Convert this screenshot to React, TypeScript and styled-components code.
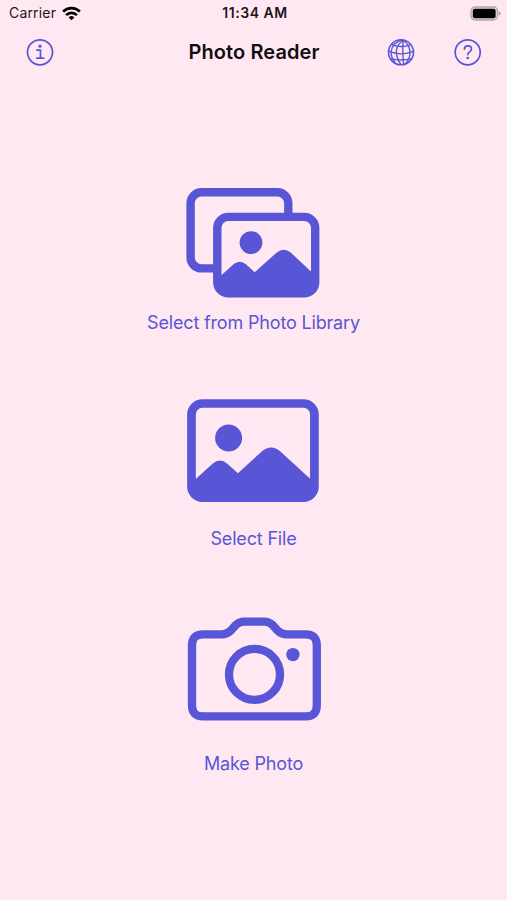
import React from "react";
import styled, { createGlobalStyle } from "styled-components";

const INK = "#5856d6";
const PAGE = "#ffe8f2";

const GlobalStyle = createGlobalStyle`
  body { margin: 0; background: ${PAGE}; }
  svg { display: block; }
`;

const Screen = styled.div`
  width: 507px;
  height: 900px;
  display: flex;
  flex-direction: column;
  overflow: hidden;
  background: ${PAGE};
  font-family: Inter, "Liberation Sans", sans-serif;
`;

const StatusBar = styled.header`
  display: grid;
  grid-template-columns: 1fr auto 1fr;
  align-items: center;
  box-sizing: border-box;
  height: 27px;
  padding: 0 6px 1px 9px;
  font-size: 14px;
  line-height: 26px;
  color: #1c161a;
`;

const Carrier = styled.div`
  display: flex;
  align-items: center;
  gap: 6px;
  letter-spacing: 0.18px;
`;

const Clock = styled.div`
  font-weight: 600;
  font-size: 14px;
  letter-spacing: 0.55px;
`;

const BatterySlot = styled.div`
  display: flex;
  justify-content: flex-end;
`;

const NavBar = styled.nav`
  display: grid;
  grid-template-columns: 1fr auto 1fr;
  align-items: center;
  height: 50px;
  padding: 0 25px 0 26px;
`;

const Title = styled.h1`
  margin: 0;
  font-size: 20px;
  font-weight: 600;
  line-height: 24px;
  letter-spacing: 0.08px;
  color: #120d10;
`;

const NavGroup = styled.div<{ $end?: boolean }>`
  display: flex;
  gap: 39px;
  justify-content: ${(p) => (p.$end ? "flex-end" : "flex-start")};
`;

const IconButton = styled.button`
  padding: 0;
  border: 0;
  background: none;
  color: ${INK};
`;

const Actions = styled.main`
  display: flex;
  flex-direction: column;
  align-items: center;
  padding-top: 98px;
`;

const Action = styled.button<{ $height: number; $gap: number }>`
  display: flex;
  flex-direction: column;
  align-items: center;
  gap: ${(p) => p.$gap}px;
  height: ${(p) => p.$height}px;
  padding: 0;
  border: 0;
  background: none;
  color: ${INK};
  font-family: inherit;
`;

const Label = styled.span`
  font-size: 18px;
  line-height: 24px;
  letter-spacing: -0.17px;
  white-space: nowrap;
`;

const Wifi = () => (
  <svg width="19" height="15" viewBox="0 0 19 15" fill="none" stroke="#000" strokeWidth="2.7">
    <path d="M1.1 5.6a12 12 0 0 1 16.8 0" />
    <path d="M4.1 9.1a7.7 7.7 0 0 1 10.8 0" />
    <path d="M9.5 14.2 6.7 11.4a4 4 0 0 1 5.6 0z" fill="#000" stroke="none" />
  </svg>
);

const Battery = () => (
  <svg width="31" height="15" viewBox="0 0 31 15">
    <rect x="1" y="1" width="26.5" height="13" rx="4" fill="#e9d5de" stroke="#b3a5ac" strokeWidth="1.3" />
    <rect x="2.8" y="2.8" width="22.8" height="9.4" rx="2" fill="#000" />
    <path d="M28.6 5.2q2 .8 2 2.3t-2 2.3z" fill="#a99ca3" />
  </svg>
);

const InfoIcon = () => (
  <svg width="28" height="28" viewBox="0 0 28 28" fill="none" stroke="currentColor" strokeWidth="1.7">
    <circle cx="14" cy="14.3" r="12.5" />
    <path d="M11 12.2h3.5v8M10.7 20.2h7" strokeLinecap="round" strokeLinejoin="round" />
    <circle cx="14" cy="8.2" r="1.6" fill="currentColor" stroke="none" />
  </svg>
);

const GlobeIcon = () => (
  <svg width="28" height="28" viewBox="0 0 28 28" fill="none" stroke="currentColor" strokeWidth="1.35">
    <circle cx="14" cy="14.3" r="12.5" strokeWidth="1.6" />
    <path d="M16.3 2.2C10.6 6 8.3 11.5 9.7 17.5c.8 3.5 2.2 6.6 4.3 9.2" />
    <path d="M15.6 2.2C9.5 2.9 4.6 7.8 4 14c-.1 3.7 1.4 7 4 10.5" />
    <path d="M16.3 2.2c-.8 6.4-.5 15.7.3 24.3" />
    <path d="M16.3 2.2c4.4 3.1 6.8 7.4 6.7 12.8-.1 4-1.4 7.2-4.4 10.8" />
    <path d="M4.4 6.4c5.2 2.6 13.3 2.8 19 .4M1.6 13.2c7 3.3 17.3 3.6 24.8.2M3.4 20.7c7 1.8 14 1.8 21.2 0" />
  </svg>
);

const HelpIcon = () => (
  <svg width="28" height="28" viewBox="0 0 28 28" fill="none" stroke="currentColor" strokeWidth="1.7">
    <circle cx="13.7" cy="14.3" r="12.5" />
    <path
      d="M10.4 11.1c.1-2 1.5-3.3 3.5-3.3 2.1 0 3.6 1.2 3.6 3.1 0 1.4-.7 2.2-1.9 3-1.3.8-1.8 1.4-1.8 2.7"
      strokeLinecap="round"
    />
    <circle cx="13.7" cy="20" r="1.3" fill="currentColor" stroke="none" />
  </svg>
);

const LibraryIcon = () => (
  <svg width="170" height="135" viewBox="-2 0 170 135" fill="none" stroke="currentColor" strokeWidth="8.4">
    <rect x="20.6" y="17.2" width="97.7" height="76.2" rx="11" />
    <rect x="47.3" y="41.9" width="97.9" height="76.4" rx="11" fill={PAGE} />
    <path
      d="M50.5 101 63.5 89.2Q69.8 84.2 76 89.2L84.7 97.3 106.5 77.7Q113.7 72 120.9 77.7L142 97.5V119H50.5z"
      fill="currentColor"
      stroke="none"
    />
    <circle cx="81" cy="67.6" r="11.4" fill="currentColor" stroke="none" />
  </svg>
);

const PictureIcon = () => (
  <svg width="170" height="130" viewBox="-1.2 0 170 130" fill="none" stroke="currentColor" strokeWidth="8.7">
    <rect x="21.3" y="18.5" width="122.9" height="94.1" rx="11" />
    <path
      d="M25 94.5 42.3 78.7Q49.7 72.3 57.2 78.7L67.7 88.3 91.5 66.5Q101 58.5 110.2 66.5L141 94.8V113H25z"
      fill="currentColor"
      stroke="none"
    />
    <circle cx="58.4" cy="53" r="13.5" fill="currentColor" stroke="none" />
  </svg>
);

const CameraIcon = () => (
  <svg width="170" height="130" viewBox="-1.2 0 170 130" fill="none" stroke="currentColor" strokeWidth="8.3">
    <path d="M32.7 29.4H51.5Q56.7 29.4 60.3 25.8L65.5 20.2Q69 16.6 74 16.6H94Q99 16.6 102.5 20.2L107.7 25.8Q111.3 29.4 116.5 29.4H135.7Q146.6 29.4 146.6 40.4V100.3Q146.6 111.3 135.7 111.3H32.7Q21.8 111.3 21.8 100.3V40.4Q21.8 29.4 32.7 29.4Z" />
    <circle cx="84.3" cy="69.4" r="25.5" />
    <circle cx="122.7" cy="49.6" r="6.7" fill="currentColor" stroke="none" />
  </svg>
);

export default function App() {
  return (
    <Screen>
      <GlobalStyle />
      <StatusBar>
        <Carrier>
          Carrier
          <Wifi />
        </Carrier>
        <Clock>11:34 AM</Clock>
        <BatterySlot>
          <Battery />
        </BatterySlot>
      </StatusBar>
      <NavBar>
        <NavGroup>
          <IconButton aria-label="Info"><InfoIcon /></IconButton>
        </NavGroup>
        <Title>Photo Reader</Title>
        <NavGroup $end>
          <IconButton aria-label="Language"><GlobeIcon /></IconButton>
          <IconButton aria-label="Help"><HelpIcon /></IconButton>
        </NavGroup>
      </NavBar>
      <Actions>
        <Action $height={210} $gap={1}>
          <LibraryIcon />
          <Label>Select from Photo Library</Label>
        </Action>
        <Action $height={220} $gap={12}>
          <PictureIcon />
          <Label>Select File</Label>
        </Action>
        <Action $height={190} $gap={17}>
          <CameraIcon />
          <Label>Make Photo</Label>
        </Action>
      </Actions>
    </Screen>
  );
}
